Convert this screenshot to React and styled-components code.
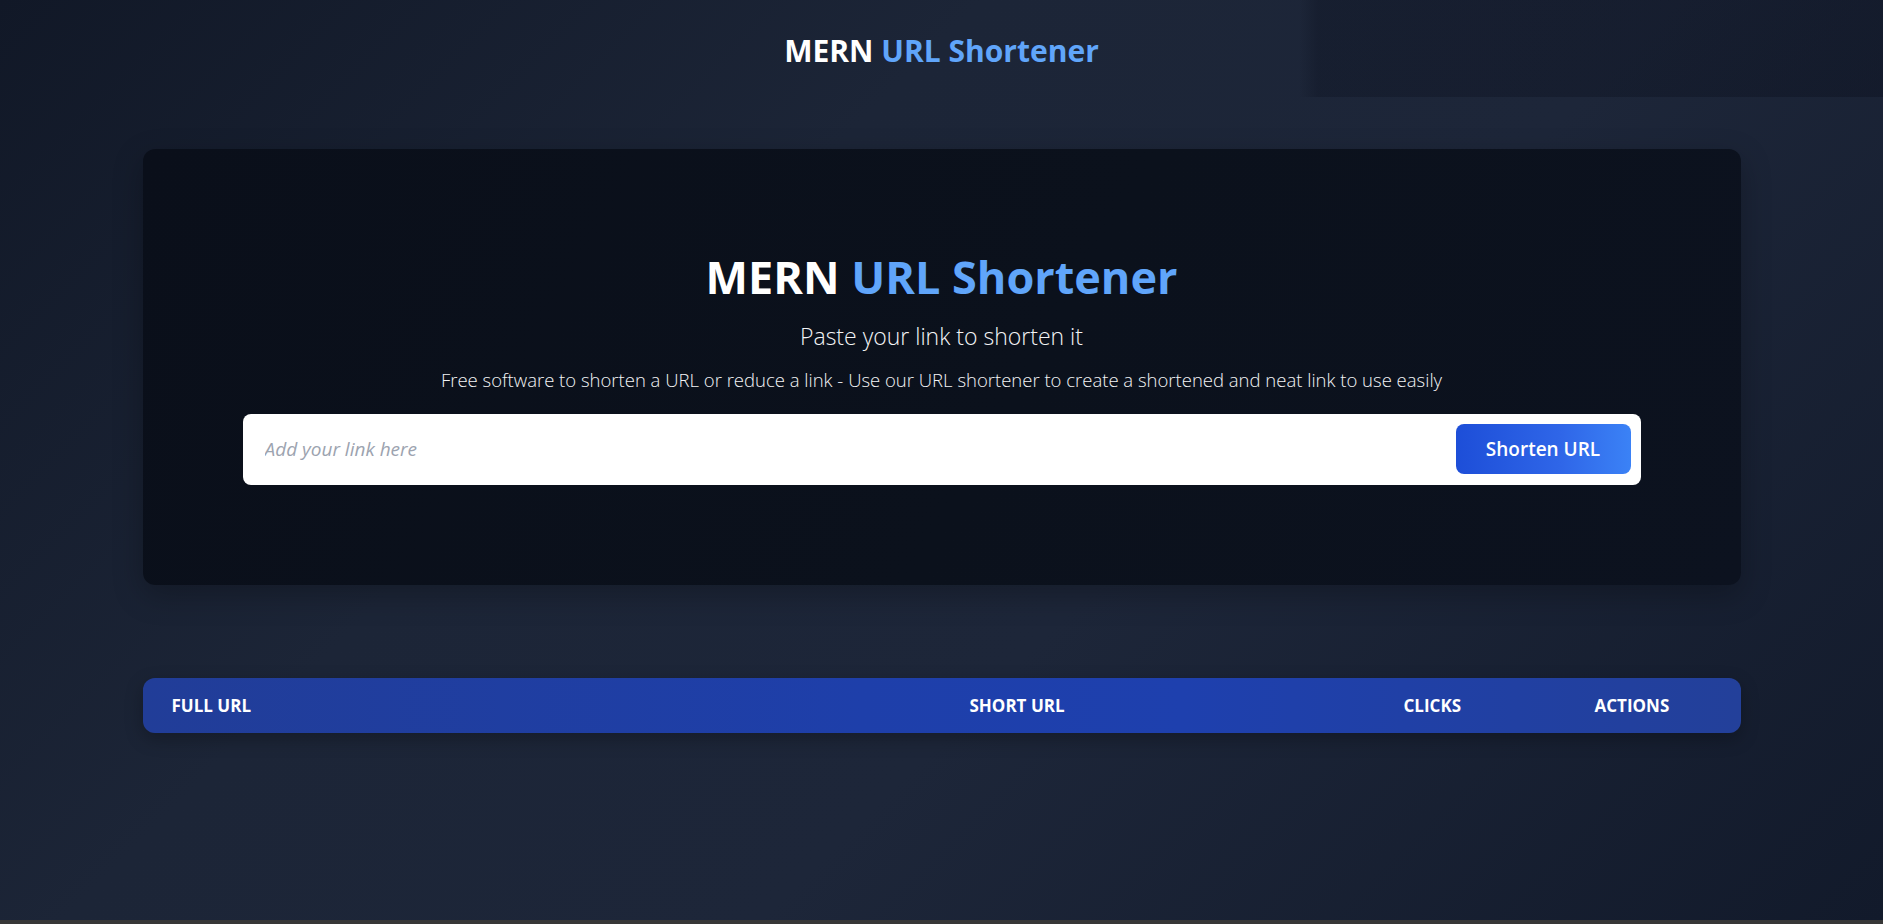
import React from "react";
import styled, { createGlobalStyle } from "styled-components";

const GlobalStyle = createGlobalStyle`
  html, body {
    margin: 0;
    padding: 0;
    background: #373737;
  }
  body {
    font-family: "Open Sans", "Noto Sans", sans-serif;
  }
  * { box-sizing: border-box; }
`;

const Page = styled.div`
  min-height: 920px;
  background: linear-gradient(135deg, #111827 0%, #1c2537 35%, #1d2639 60%, #121a2b 100%);
  display: flex;
  flex-direction: column;
`;

const Header = styled.header`
  height: 97px;
  padding-top: 4px;
  display: flex;
  align-items: center;
  justify-content: center;
  background: linear-gradient(90deg, rgba(0,0,0,0) 0%, rgba(0,0,0,0) 69%, rgba(8,12,26,0.28) 70%, rgba(8,12,26,0.35) 100%);
`;

const Brand = styled.h1`
  margin: 0;
  font-size: ${(p) => p.$size}px;
  font-weight: 700;
  color: #ffffff;
  line-height: 1.2;
`;

const Accent = styled.span`
  color: #60a5fa;
`;

const Main = styled.main`
  width: 1598px;
  margin: 52px auto 0;
  display: flex;
  flex-direction: column;
  gap: 93px;
`;

const Card = styled.section`
  height: 436px;
  border-radius: 12px;
  background: linear-gradient(120deg, #0a0f1a 0%, #0b111c 55%, #0c121f 100%);
  box-shadow: 0 10px 30px rgba(0, 0, 0, 0.25);
  display: flex;
  flex-direction: column;
  align-items: center;
  padding: 101px 100px 0;
`;

const Subtitle = styled.p`
  margin: 18px 0 0;
  font-size: 23px;
  font-weight: 300;
  color: #f3f4f6;
  line-height: 1.3;
`;

const Description = styled.p`
  margin: 16px 0 0;
  font-size: 18.5px;
  font-weight: 300;
  color: #f3f4f6;
  line-height: 1.3;
`;

const InputBox = styled.form`
  margin-top: 22px;
  width: 100%;
  height: 71px;
  background: #ffffff;
  border-radius: 8px;
  display: flex;
  align-items: center;
  padding: 10px 10px 10px 20px;
  gap: 12px;
`;

const LinkInput = styled.input`
  flex: 1;
  border: none;
  outline: none;
  background: transparent;
  font-family: "Open Sans", "Noto Sans", sans-serif;
  font-size: 19px;
  color: #111827;
  &::placeholder {
    color: #9ca3af;
    font-style: italic;
  }
`;

const ShortenButton = styled.button`
  width: 175px;
  height: 50px;
  border: none;
  border-radius: 8px;
  background: linear-gradient(90deg, #1d4ed8 0%, #2f66e8 60%, #3b82f6 100%);
  color: #ffffff;
  font-family: "Open Sans", "Noto Sans", sans-serif;
  font-size: 19px;
  font-weight: 600;
  cursor: pointer;
`;

const TableHead = styled.div`
  height: 55px;
  border-radius: 12px;
  background: linear-gradient(90deg, #213d98 0%, #1e3faa 45%, #1e40ae 65%, #23409a 100%);
  box-shadow: 0 6px 18px rgba(0, 0, 0, 0.25);
  display: grid;
  grid-template-columns: 798px 434px 191px 1fr;
  align-items: center;
  padding: 0 0 0 29px;
`;

const HeadCell = styled.div`
  color: #ffffff;
  font-size: 17px;
  font-weight: 700;
  text-transform: uppercase;
`;

export default function App() {
  return (
    <>
      <GlobalStyle />
      <Page>
        <Header>
          <Brand $size={30}>
            MERN <Accent>URL Shortener</Accent>
          </Brand>
        </Header>
        <Main>
          <Card>
            <Brand $size={45}>
              MERN <Accent>URL Shortener</Accent>
            </Brand>
            <Subtitle>Paste your link to shorten it</Subtitle>
            <Description>
              Free software to shorten a URL or reduce a link - Use our URL shortener to create a shortened and neat link to use easily
            </Description>
            <InputBox onSubmit={(e) => e.preventDefault()}>
              <LinkInput placeholder="Add your link here" />
              <ShortenButton type="submit">Shorten URL</ShortenButton>
            </InputBox>
          </Card>
          <TableHead>
            <HeadCell>Full URL</HeadCell>
            <HeadCell>Short URL</HeadCell>
            <HeadCell>Clicks</HeadCell>
            <HeadCell>Actions</HeadCell>
          </TableHead>
        </Main>
      </Page>
    </>
  );
}
